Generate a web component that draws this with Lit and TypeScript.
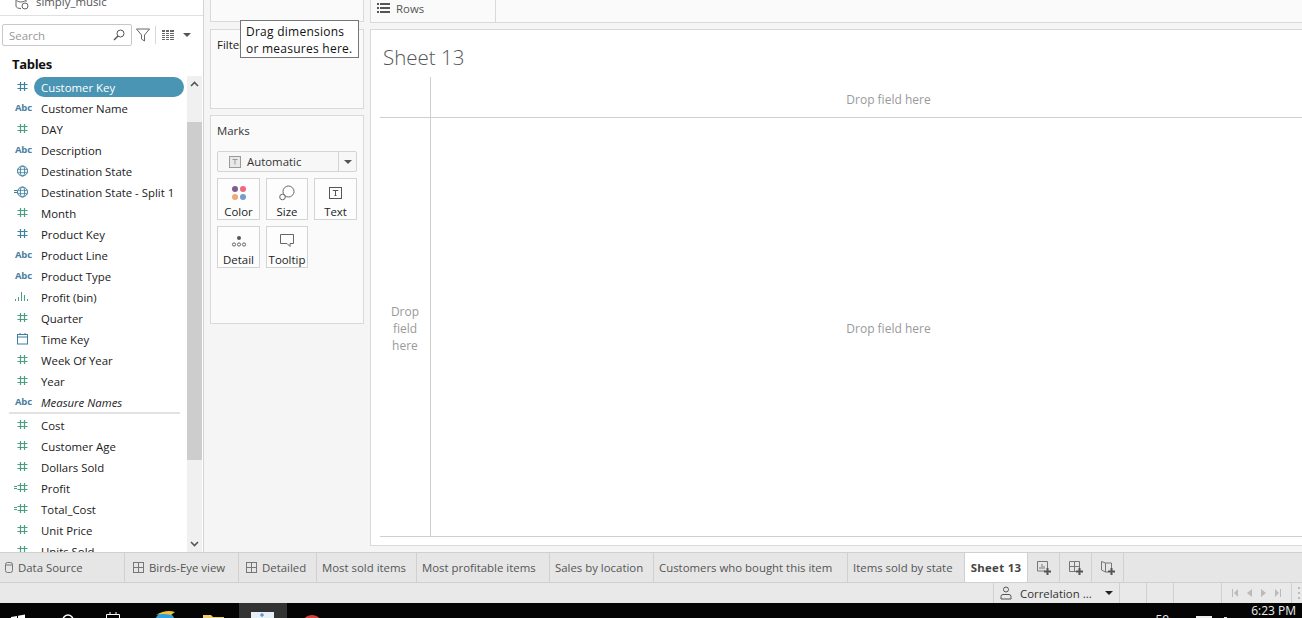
import { LitElement, html, css, svg } from "lit";
import { customElement } from "lit/decorators.js";

const TEAL = "#4a9e84";
const BLUE = "#3f7f9f";

type Field = { name: string; icon: string; key?: boolean; linked?: boolean; italic?: boolean };

const dimensions: Field[] = [
  { name: "Customer Key", icon: "hash", key: true },
  { name: "Customer Name", icon: "abc" },
  { name: "DAY", icon: "hash" },
  { name: "Description", icon: "abc" },
  { name: "Destination State", icon: "globe" },
  { name: "Destination State - Split 1", icon: "globe", linked: true },
  { name: "Month", icon: "hash" },
  { name: "Product Key", icon: "hash", key: true },
  { name: "Product Line", icon: "abc" },
  { name: "Product Type", icon: "abc" },
  { name: "Profit (bin)", icon: "bars" },
  { name: "Quarter", icon: "hash" },
  { name: "Time Key", icon: "date" },
  { name: "Week Of Year", icon: "hash" },
  { name: "Year", icon: "hash" },
  { name: "Measure Names", icon: "abc", italic: true },
];

const measures: Field[] = [
  { name: "Cost", icon: "hash" },
  { name: "Customer Age", icon: "hash" },
  { name: "Dollars Sold", icon: "hash" },
  { name: "Profit", icon: "hash", linked: true },
  { name: "Total_Cost", icon: "hash", linked: true },
  { name: "Unit Price", icon: "hash" },
  { name: "Units Sold", icon: "hash" },
];

const gridIcon = html`<svg width="12" height="12" viewBox="0 0 12 12" fill="none" stroke="#777"><rect x=".5" y=".5" width="10" height="10" /><path d="M5.500 .5v10M.5 5.500h10" /></svg>`;

function fieldIcon(f: Field) {
  const color = f.key ? BLUE : TEAL;
  const link = f.linked ? svg`<path d="M2 4.500h3M2 6.500h3" stroke=${f.icon === "globe" ? BLUE : TEAL} />` : "";
  if (f.icon === "abc") return html`<span class="abc">Abc</span>`;
  if (f.icon === "hash")
    return html`<svg width="20" height="11" viewBox="0 0 20 11" fill="none" stroke=${color}>${link}<path d="M8.500 1v9M12.500 1v9M5.500 3.500h10M5.500 7.500h10" stroke-width="1.200" /></svg>`;
  if (f.icon === "globe")
    return html`<svg width="20" height="12" viewBox="0 0 20 12" fill="none" stroke=${BLUE}>${link}<circle cx="10.500" cy="6" r="5" /><ellipse cx="10.500" cy="6" rx="2.200" ry="5" /><path d="M5.500 4.300h10M5.500 7.700h10" stroke-width=".8" /></svg>`;
  if (f.icon === "date")
    return html`<svg width="20" height="12" viewBox="0 0 20 12" fill="none" stroke=${BLUE}><rect x="5.500" y="1.500" width="10" height="9.500" /><path d="M5.500 4h10M8 0v2M13 0v2" /></svg>`;
  return html`<svg width="20" height="11" viewBox="0 0 20 11" fill=${TEAL}><rect x="3" y="8" width="1" height="2" /><rect x="6" y="6" width="1" height="4" /><rect x="9" y="1" width="1" height="9" /><rect x="12" y="4" width="1" height="6" /><rect x="15" y="8" width="1" height="2" /></svg>`;
}

const tabs = [
  { label: "Birds-Eye view", w: 114, pad: 8, grid: true },
  { label: "Detailed", w: 78, pad: 7, grid: true },
  { label: "Most sold items", w: 100, pad: 5 },
  { label: "Most profitable items", w: 133, pad: 5 },
  { label: "Sales by location", w: 104, pad: 5 },
  { label: "Customers who bought this item", w: 194, pad: 5 },
  { label: "Items sold by state", w: 117, pad: 5 },
];

const cards = [
  {
    label: "Color",
    icon: html`<svg width="16" height="16" viewBox="0 0 16 16"><circle cx="4" cy="4" r="3" fill="#7b5f8f" /><circle cx="12" cy="4" r="3" fill="#ee6a7a" /><circle cx="4" cy="12" r="3" fill="#f2a878" /><circle cx="12" cy="12" r="3" fill="#6f9fce" /></svg>`,
  },
  {
    label: "Size",
    icon: html`<svg width="16" height="16" viewBox="0 0 16 16" fill="none" stroke="#666"><circle cx="9.500" cy="6.500" r="5.500" /><circle cx="3.500" cy="12" r="2.800" fill="#fafafa" /></svg>`,
  },
  {
    label: "Text",
    icon: html`<svg width="14" height="13" viewBox="0 0 14 13" fill="none" stroke="#555"><rect x=".5" y=".5" width="12" height="11" /><path d="M4 4V3.500h5V4M6.500 3.500v5M5.500 8.500h2" /></svg>`,
  },
  {
    label: "Detail",
    icon: html`<svg width="16" height="12" viewBox="0 0 16 12" fill="none" stroke="#666"><circle cx="8" cy="3" r="2" fill="#555" stroke="none" /><circle cx="3" cy="9.500" r="1.600" /><circle cx="8" cy="9.500" r="1.600" /><circle cx="13" cy="9.500" r="1.600" /></svg>`,
  },
  {
    label: "Tooltip",
    icon: html`<svg width="15" height="14" viewBox="0 0 15 14" fill="none" stroke="#666"><path d="M.5 .5h13v9h-3.500v3l-3-3H.5z" /></svg>`,
  },
];

@customElement("app-root")
export class AppRoot extends LitElement {
  static styles = css`
    :host {
      display: block;
      width: 1302px;
      height: 618px;
      overflow: hidden;
      background: #f5f5f5;
      font-family: "Open Sans", "Noto Sans", sans-serif;
      font-size: 11.4px;
      color: #1a1a1a;
    }
    * {
      box-sizing: border-box;
    }
    .work {
      display: flex;
      height: 552px;
      overflow: hidden;
    }

    /* left data pane */
    .data {
      width: 204px;
      flex: none;
      background: #fff;
      border-right: 1px solid #d4d4d4;
      display: flex;
      flex-direction: column;
      overflow: hidden;
    }
    .source {
      height: 16px;
      flex: none;
      display: flex;
      align-items: flex-end;
      gap: 6px;
      padding-left: 15px;
      border-bottom: 1px solid #e0e0e0;
      color: #555;
      line-height: 14px;
      overflow: hidden;
    }
    .source svg {
      margin-bottom: 5px;
    }
    .source span {
      margin-bottom: 6px;
    }
    .tools {
      height: 30px;
      flex: none;
      display: flex;
      align-items: center;
      padding: 8px 0 0 2px;
    }
    .search {
      width: 130px;
      height: 22px;
      border: 1px solid #c8c8c8;
      border-radius: 2px;
      color: #999;
      padding: 0 6px;
      display: flex;
      align-items: center;
      justify-content: space-between;
    }
    .tools .funnel {
      margin: 0 0 0 4px;
    }
    .tools .sep {
      width: 1px;
      height: 18px;
      background: #d8d8d8;
      margin: 0 6px 0 5px;
    }
    .caret {
      width: 0;
      height: 0;
      border-left: 4px solid transparent;
      border-right: 4px solid transparent;
      border-top: 4px solid #555;
    }
    .tools .caret {
      margin-left: 8px;
    }
    .heading {
      height: 30px;
      flex: none;
      padding: 9px 0 0 12px;
      font-weight: 700;
      font-size: 13px;
      line-height: 18px;
      letter-spacing: -0.3px;
      color: #111;
    }
    .listwrap {
      flex: 1;
      display: flex;
      min-height: 0;
    }
    .list {
      flex: 1;
      min-width: 0;
      overflow: hidden;
    }
    .row {
      height: 21px;
      display: flex;
      align-items: center;
      padding-left: 12px;
      white-space: nowrap;
    }
    .row .ic {
      width: 22px;
      display: flex;
      justify-content: flex-start;
      flex: none;
    }
    .row .name {
      padding-left: 7px;
      height: 20px;
      line-height: 22px;
    }
    .row.on .name {
      background: #4a95b3;
      color: #fff;
      width: 150px;
      border-radius: 10px;
    }
    .row.italic .name {
      font-style: italic;
    }
    .abc {
      font-size: 9.5px;
      font-weight: 700;
      color: #4a7f9f;
      padding-left: 3px;
      letter-spacing: -0.2px;
    }
    .divider {
      height: 2px;
      margin: 0 7px 0 9px;
      background: #e2e2e2;
    }
    .scroll {
      width: 15px;
      flex: none;
      margin-right: 1px;
      background: #f0f0f0;
      display: flex;
      flex-direction: column;
    }
    .scroll .arrow {
      height: 16px;
      display: flex;
      align-items: center;
      justify-content: center;
      flex: none;
    }
    .scroll .gap {
      height: 30px;
      flex: none;
    }
    .scroll .thumb {
      height: 338px;
      flex: none;
      background: #cdcdcd;
    }
    .scroll .fill {
      flex: 1;
    }

    /* shelves column */
    .shelves {
      width: 166px;
      flex: none;
      padding: 0 6px;
      display: flex;
      flex-direction: column;
      gap: 7px;
    }
    .card {
      background: #fafafa;
      border: 1px solid #d9d9d9;
    }
    .pages {
      height: 22px;
      flex: none;
      border-top: none;
    }
    .filters {
      position: relative;
      height: 80px;
      flex: none;
      margin-bottom: -1px;
      padding: 7px 6px;
    }
    .tip {
      position: absolute;
      left: 29px;
      top: -10px;
      width: 119px;
      height: 38px;
      background: #fff;
      border: 1px solid #767676;
      padding: 2px 5px 0;
      line-height: 17px;
      font-size: 12px;
      letter-spacing: 0.25px;
      color: #111;
      white-space: nowrap;
    }
    .marks {
      height: 209px;
      flex: none;
      padding: 7px 6px;
    }
    .marks .title {
      color: #333;
      line-height: 16px;
    }
    .auto {
      margin-top: 12px;
      height: 21px;
      border: 1px solid #d4d4d4;
      border-radius: 2px;
      display: flex;
      align-items: center;
      background: #f7f7f7;
    }
    .auto .val {
      flex: 1;
      display: flex;
      align-items: center;
      gap: 6px;
      padding-left: 11px;
      color: #333;
    }
    .auto .drop {
      width: 18px;
      height: 100%;
      border-left: 1px solid #d4d4d4;
      display: flex;
      align-items: center;
      justify-content: center;
    }
    .mk {
      margin-top: 6px;
      display: grid;
      grid-template-columns: 43px 42px 43px;
      grid-auto-rows: 42px;
      column-gap: 6px;
      row-gap: 6px;
    }
    .mk > div {
      border: 1px solid #d4d4d4;
      display: flex;
      flex-direction: column;
      align-items: center;
      padding-top: 6px;
      color: #222;
      line-height: 14px;
      background: #fdfdfd;
    }
    .mk .ico {
      height: 16px;
      display: flex;
      align-items: center;
    }
    .mk .lab {
      margin-top: auto;
    }

    /* main view */
    .view {
      flex: 1;
      min-width: 0;
      display: flex;
      flex-direction: column;
      overflow: hidden;
    }
    .rows {
      height: 23px;
      flex: none;
      background: #fafafa;
      border-bottom: 1px solid #d9d9d9;
      display: flex;
    }
    .rows .lab {
      width: 126px;
      border-left: 1px solid #d9d9d9;
      border-right: 1px solid #d9d9d9;
      display: flex;
      align-items: center;
      gap: 6px;
      padding: 0 0 6px 6px;
      color: #555;
    }
    /* the sheet runs past the right edge of the window */
    .sheet {
      flex: 1;
      margin: 6px -44px 6px 0;
      background: #fff;
      border: 1px solid #d9d9d9;
      border-right: none;
      display: flex;
      flex-direction: column;
      padding: 0 0 8px 9px;
    }
    .sheet h1 {
      margin: 0;
      height: 47px;
      flex: none;
      font-weight: 300;
      font-size: 20.5px;
      line-height: 26px;
      padding: 14px 0 0 3px;
      color: #555;
    }
    .canvas {
      flex: 1;
      display: grid;
      grid-template-columns: 51px 1fr;
      grid-template-rows: 41px 1fr;
      color: #9a9a9a;
      font-size: 12px;
      border-bottom: 1px solid #cfcfcf;
    }
    .canvas > div {
      display: flex;
      align-items: center;
      justify-content: center;
      text-align: center;
      line-height: 17px;
      padding-top: 2px;
    }
    .canvas .tl {
      border-right: 1px solid #cfcfcf;
      border-bottom: 1px solid #cfcfcf;
    }
    .canvas .tr {
      border-bottom: 1px solid #cfcfcf;
      padding-top: 4px;
    }
    .canvas .bl {
      border-right: 1px solid #cfcfcf;
    }

    /* tab strip */
    .tabs {
      height: 31px;
      display: flex;
      background: #e6e6e6;
      border-top: 1px solid #d0d0d0;
      border-bottom: 1px solid #d0d0d0;
    }
    .tab {
      flex: none;
      display: flex;
      align-items: center;
      gap: 4px;
      padding-left: 5px;
      border-right: 1px solid #d0d0d0;
      color: #555;
      white-space: nowrap;
    }
    .tab.src {
      width: 125px;
      gap: 5px;
    }
    .tab.cur {
      width: 63px;
      background: #fff;
      font-weight: 700;
      letter-spacing: 0.3px;
      color: #444;
      justify-content: center;
      padding: 0;
    }
    .tab.add {
      width: 32px;
      justify-content: center;
      padding: 0;
    }

    /* status bar */
    .status {
      height: 20px;
      background: #e9e9e9;
      display: flex;
      justify-content: flex-end;
    }
    .status .user {
      width: 127px;
      border-left: 1px solid #d0d0d0;
      border-right: 1px solid #d0d0d0;
      display: flex;
      align-items: center;
      gap: 8px;
      padding: 0 6px;
      color: #333;
    }
    .status .user span:not(.caret) {
      flex: 1;
      white-space: nowrap;
    }
    .status .user .caret {
      border-top-color: #222;
    }
    .status .cell {
      width: 27px;
      border-right: 1px solid #d0d0d0;
    }
    .status .wide {
      width: 48px;
    }
    .status .nav {
      width: 70px;
      border-right: 1px solid #d0d0d0;
      display: flex;
      align-items: center;
      justify-content: center;
      gap: 9px;
    }
    .status .end {
      width: 10px;
      display: flex;
      align-items: center;
      padding-left: 6px;
    }

    /* windows taskbar, mostly cropped by the window */
    .taskbar {
      height: 15px;
      background: #050505;
      display: flex;
      align-items: flex-start;
      overflow: hidden;
      color: #eee;
    }
    .taskbar .apps {
      flex: none;
    }
    .taskbar .tray {
      font-size: 12px;
      line-height: 14px;
      margin: 10px 27px 0 auto;
    }
    .taskbar .box {
      width: 16px;
      height: 5px;
      margin: 13px 12px 0 0;
      background: #eee;
    }
    .taskbar .pip {
      width: 3px;
      height: 3px;
      margin: 14px 24px 0 0;
      background: #ddd;
    }
    .taskbar .clock {
      font-size: 12px;
      line-height: 14px;
      margin: 1px 6px 0 0;
      white-space: nowrap;
    }
  `;

  private row(f: Field) {
    const cls = `row${f.name === "Customer Key" ? " on" : ""}${f.italic ? " italic" : ""}`;
    return html`<div class=${cls}><span class="ic">${fieldIcon(f)}</span><span class="name">${f.name}</span></div>`;
  }

  private addIcon(body: unknown) {
    return html`<svg width="16" height="16" viewBox="0 0 16 16" fill="none" stroke="#777">${body}<path d="M11.500 8v7M8 11.500h7" stroke="#555" stroke-width="2" /></svg>`;
  }

  render() {
    return html`
      <div class="work">
        <aside class="data">
          <div class="source">
            <svg width="15" height="14" viewBox="0 0 15 14" fill="none" stroke="#666"><ellipse cx="6" cy="3" rx="5" ry="3" /><path d="M1 3v7c0 1.500 2 2.500 5 2.500M11 3v3" /><circle cx="10" cy="10" r="3" /></svg>
            <span>simply_music</span>
          </div>
          <div class="tools">
            <div class="search">
              <span>Search</span>
              <svg width="12" height="12" viewBox="0 0 12 12" fill="none" stroke="#555"><circle cx="7.500" cy="4.500" r="3.500" /><path d="M5 7l-4 4" stroke-width="1.500" /></svg>
            </div>
            <svg class="funnel" width="14" height="14" viewBox="0 0 14 14" fill="none" stroke="#666"><path d="M.5 1h13L8.500 7v6l-3-2V7z" /></svg>
            <span class="sep"></span>
            <svg width="13" height="10" viewBox="0 0 13 10" fill="#666"><path d="M0 0h3v2H0zM4 0h3v2H4zM8 0h4v2H8zM0 3h3v1H0zM4 3h3v1H4zM8 3h4v1H8zM0 5h3v1H0zM4 5h3v1H4zM8 5h4v1H8zM0 7h3v1H0zM4 7h3v1H4zM8 7h4v1H8zM0 9h3v1H0zM4 9h3v1H4zM8 9h4v1H8z" /></svg>
            <span class="caret"></span>
          </div>
          <div class="heading">Tables</div>
          <div class="listwrap">
            <div class="list">
              ${dimensions.map((f) => this.row(f))}
              <div class="divider"></div>
              ${measures.map((f) => this.row(f))}
            </div>
            <div class="scroll">
              <div class="arrow">
                <svg width="9" height="6" viewBox="0 0 9 6" fill="none" stroke="#555" stroke-width="1.600"><path d="M1 5l3.500-3.500L8 5" /></svg>
              </div>
              <div class="gap"></div>
              <div class="thumb"></div>
              <div class="fill"></div>
              <div class="arrow">
                <svg width="9" height="6" viewBox="0 0 9 6" fill="none" stroke="#555" stroke-width="1.600"><path d="M1 1l3.500 3.500L8 1" /></svg>
              </div>
            </div>
          </div>
        </aside>

        <section class="shelves">
          <div class="card pages"></div>
          <div class="card filters">
            Filters
            <div class="tip">Drag dimensions<br />or measures here.</div>
          </div>
          <div class="card marks">
            <div class="title">Marks</div>
            <div class="auto">
              <span class="val">
                <svg width="12" height="12" viewBox="0 0 12 12" fill="#e8e8e8" stroke="#999"><rect x=".5" y=".5" width="11" height="11" /><path d="M3.500 3.500h5M6 3.500v5" fill="none" /></svg>
                Automatic
              </span>
              <span class="drop"><span class="caret"></span></span>
            </div>
            <div class="mk">
              ${cards.map((c) => html`<div><span class="ico">${c.icon}</span><span class="lab">${c.label}</span></div>`)}
            </div>
          </div>
        </section>

        <main class="view">
          <div class="rows">
            <div class="lab">
              <svg width="13" height="10" viewBox="0 0 13 10" fill="#555"><path d="M0 0h2v2H0zM3 0h10v2H3zM0 4h2v2H0zM3 4h10v2H3zM0 8h2v2H0zM3 8h10v2H3z" /></svg>
              Rows
            </div>
          </div>
          <div class="sheet">
            <h1>Sheet 13</h1>
            <div class="canvas">
              <div class="tl"></div>
              <div class="tr">Drop field here</div>
              <div class="bl">Drop<br />field<br />here</div>
              <div>Drop field here</div>
            </div>
          </div>
        </main>
      </div>

      <nav class="tabs">
        <div class="tab src">
          <svg width="8" height="11" viewBox="0 0 8 11" fill="none" stroke="#777"><rect x=".5" y=".5" width="7" height="10" rx="2" /><path d="M.5 3h7" /></svg>
          Data Source
        </div>
        ${tabs.map(
          (t) => html`<div class="tab" style="width:${t.w}px;padding-left:${t.pad}px">${t.grid ? gridIcon : ""}${t.label}</div>`
        )}
        <div class="tab cur">Sheet 13</div>
        <div class="tab add">
          ${this.addIcon(svg`<path d="M9 11H1.500V1.500h10V8" /><path d="M4 9V7M6 9V4M8 9V6" />`)}
        </div>
        <div class="tab add">
          ${this.addIcon(svg`<path d="M8 11.500H1.500V1.500h10V8M6.500 1.500v10M1.500 6.500h10" />`)}
        </div>
        <div class="tab add">
          ${this.addIcon(svg`<path d="M8 12H5.500L1.500 10V1.500L5.500 3H11.500V8M5.500 3V12" />`)}
        </div>
      </nav>

      <footer class="status">
        <div class="user">
          <svg width="12" height="14" viewBox="0 0 12 14" fill="none" stroke="#555"><circle cx="6" cy="3.500" r="2.500" /><path d="M1 13v-2.500q0-2 2-2h6q2 0 2 2V13z" /></svg>
          <span>Correlation ...</span>
          <span class="caret"></span>
        </div>
        <div class="cell"></div>
        <div class="cell"></div>
        <div class="cell wide"></div>
        <div class="nav">
          <svg width="6" height="8" viewBox="0 0 6 8" fill="#bbb"><path d="M0 0h1v8H0zM6 0v8L2 4z" /></svg>
          <svg width="5" height="8" viewBox="0 0 5 8" fill="#bbb"><path d="M5 0v8L0 4z" /></svg>
          <svg width="5" height="8" viewBox="0 0 5 8" fill="#bbb"><path d="M0 0v8l5-4z" /></svg>
          <svg width="6" height="8" viewBox="0 0 6 8" fill="#bbb"><path d="M5 0h1v8H5zM0 0v8l4-4z" /></svg>
        </div>
        <div class="end">
          <svg width="2" height="12" viewBox="0 0 2 12" fill="#bbb"><path d="M0 0h2v2H0zM0 5h2v2H0zM0 10h2v2H0z" /></svg>
        </div>
      </footer>

      <div class="taskbar">
        <svg class="apps" width="340" height="15" viewBox="0 0 340 15">
          <path d="M11 14l6-1v2h-6zM18 12.800l7-1.200V15h-7z" fill="#fff" />
          <circle cx="68" cy="17" r="5" fill="none" stroke="#fff" stroke-width="1.500" />
          <path d="M106.500 15v-3.500h13V15M110 11V9M116 11V9" fill="none" stroke="#fff" />
          <circle cx="165" cy="19" r="10" fill="#2f9fe0" />
          <path d="M156 12q10-6 19-3l-4 3q-8-2-15 0z" fill="#f2c230" />
          <path d="M203 12h8l2 2h11v1h-21z" fill="#f0cf6a" />
          <rect x="239" y="0" width="48" height="15" fill="#333" />
          <rect x="251" y="9" width="23" height="6" fill="#e8eef6" />
          <path d="M262 10v4M260 12h4" stroke="#3a78c0" />
          <circle cx="312" cy="23" r="11" fill="#d8423a" />
        </svg>
        <span class="tray">59</span>
        <span class="box"></span>
        <span class="pip"></span>
        <div class="clock">6:23 PM</div>
      </div>
    `;
  }
}
